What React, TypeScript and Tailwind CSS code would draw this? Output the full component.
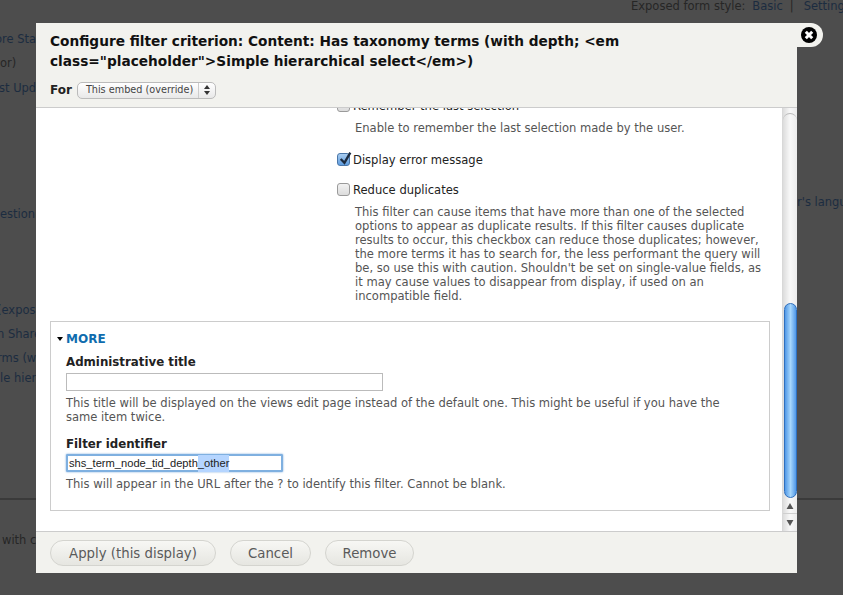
const font = { fontFamily: '"DejaVu Sans", sans-serif' };

function Checkbox({ checked = false }: { checked?: boolean }) {
  return (
    <span
      className={`relative h-[13px] w-[13px] shrink-0 rounded-[3px] border ${
        checked
          ? "border-[#4a76a8] bg-gradient-to-b from-[#a9cdf0] to-[#5f9de0]"
          : "border-[#9a9a9a] bg-gradient-to-b from-[#f2f2f2] to-[#dcdcdc]"
      }`}
    >
      {checked && (
        <svg viewBox="0 0 14 14" className="absolute -top-[3px] left-0 h-[15px] w-[15px]">
          <path d="M2.5 7.5 L6 11 L11.5 1.5" fill="none" stroke="#1d2c40" strokeWidth="2.2" />
        </svg>
      )}
    </span>
  );
}

function PillButton({ label, width }: { label: string; width: string }) {
  return (
    <button
      type="button"
      className={`flex h-[26px] items-center justify-center rounded-full border border-[#d4d4cf] bg-gradient-to-b from-[#f7f7f4] to-[#e6e6e1] pt-[1px] text-[13.3px] text-[#5a5a5a] ${width}`}
    >
      {label}
    </button>
  );
}

function Backdrop() {
  return (
    <div className="flex h-[595px] flex-col overflow-hidden bg-[#4d4d4d] text-[11.5px] text-[#1c2c40]">
      <div className="flex h-[13px] gap-[7px] whitespace-nowrap pl-[631px] leading-[13px]">
        <span className="text-[#262626]">Exposed form style:</span>
        <span>Basic</span>
        <span className="text-[#262626]">|</span>
        <span className="ml-[3px]">Settings</span>
      </div>
      <div className="mt-[18px] flex justify-between whitespace-nowrap">
        <div className="flex flex-col">
          <span className="ml-[-5px] h-[24px]">ore Stat</span>
          <span className="h-[25px] text-[#262626]">or)</span>
          <span className="ml-[-1px] h-[126px]">st Upda</span>
          <span className="h-[96px]">estion</span>
          <span className="ml-[-3px] h-[24px]">(expos</span>
          <span className="ml-[-3px] h-[24px]">n Share</span>
          <span className="ml-[-3px] h-[20px]">rms (w</span>
          <span className="h-[24px]">le hiera</span>
        </div>
        <span className="mt-[163px] w-[46px] overflow-hidden">r's langu</span>
      </div>
      <div className="mt-[104px] h-[2px] bg-[#3a3a3a]" />
      <div className="mt-[32px] whitespace-nowrap pl-[2px] text-[#262626]">with c</div>
    </div>
  );
}

function Scrollbar() {
  return (
    <div className="flex w-[15px] shrink-0 flex-col border-l border-[#d8d8d8] bg-gradient-to-r from-[#dcdcdc] via-[#f8f8f8] to-[#ececec]">
      <div className="mt-[5px] h-[7px] rounded-t-full border-t border-[#b9b9b9]" />
      <div className="mt-[183px] flex h-[195px] justify-center">
        <div className="w-[13px] rounded-full border border-[#2f6fbd] bg-gradient-to-r from-[#4f97e6] via-[#a6d6fb] to-[#4f97e6]" />
      </div>
      <div className="flex flex-1 flex-col">
        <span className="flex h-[16px] items-center justify-center border-b border-[#cfcfcf]">
          <svg viewBox="0 0 8 7" className="h-[6px] w-[8px]"><path d="M4 0 L8 7 L0 7Z" fill="#555" /></svg>
        </span>
        <span className="flex flex-1 items-center justify-center">
          <svg viewBox="0 0 8 7" className="h-[6px] w-[8px]"><path d="M0 0 L8 0 L4 7Z" fill="#555" /></svg>
        </span>
      </div>
    </div>
  );
}

function Dialog() {
  return (
    <div className="absolute left-[36px] top-[23px] flex h-[550px] w-[761px] flex-col bg-[#f2f2ee]">
      {/* close tab hangs off the top right corner */}
      <div className="absolute -right-[26px] top-0 flex h-[24px] w-[28px] items-center justify-center rounded-r-[12px] bg-[#f2f2ee] pb-[1px]">
        <svg viewBox="0 0 16 16" className="h-[16px] w-[16px]">
          <circle cx="8" cy="8" r="8" fill="#000" />
          <path d="M4.8 4.8 L11.2 11.2 M11.2 4.8 L4.8 11.2" stroke="#fff" strokeWidth="3" />
        </svg>
      </div>

      <header className="h-[85px] shrink-0 border-b border-[#ccc] px-[14px] pt-[8px]">
        <h1 className="text-[13.7px] font-bold leading-[20px] text-[#111]">
          Configure filter criterion: Content: Has taxonomy terms (with depth; &lt;em
          <br />
          class="placeholder"&gt;Simple hierarchical select&lt;/em&gt;)
        </h1>
        <div className="mt-[10px] flex items-center gap-[5px]">
          <span className="text-[12px] font-bold text-[#222]">For</span>
          <div className="flex h-[17px] w-[139px] items-center rounded-[5px] border border-[#bbb] bg-gradient-to-b from-[#fff] to-[#e8e8e8] text-[9.7px] text-[#444]">
            <span className="w-[120px] pl-[8px] whitespace-nowrap">This embed (override)</span>
            <span className="flex h-full flex-1 flex-col items-center justify-center gap-[2px] border-l border-[#ccc]">
              <svg viewBox="0 0 6 4" className="h-[4px] w-[6px]"><path d="M3 0 L6 4 L0 4Z" fill="#333" /></svg>
              <svg viewBox="0 0 6 4" className="h-[4px] w-[6px]"><path d="M0 0 L6 0 L3 4Z" fill="#333" /></svg>
            </span>
          </div>
        </div>
      </header>

      <div className="flex min-h-0 flex-1 bg-white">
        <div className="min-w-0 flex-1 overflow-hidden">
          <div className="ml-[301px] mt-[-10px] w-[420px] text-[11.55px] leading-[14px] text-[#555]">
            <label className="flex h-[15px] items-center gap-[3px] text-[#222]">
              <Checkbox /> Remember the last selection
            </label>
            <p className="ml-[18px] mt-[8px]">Enable to remember the last selection made by the user.</p>
            <label className="mt-[17px] flex h-[15px] items-center gap-[3px] text-[#222]">
              <Checkbox checked /> Display error message
            </label>
            <label className="mt-[15px] flex h-[15px] items-center gap-[3px] text-[#222]">
              <Checkbox /> Reduce duplicates
            </label>
            <p className="ml-[18px] mt-[8px] w-[415px]">
              This filter can cause items that have more than one of the selected
              <br />
              options to appear as duplicate results. If this filter causes duplicate
              <br />
              results to occur, this checkbox can reduce those duplicates; however,
              <br />
              the more terms it has to search for, the less performant the query will
              <br />
              be, so use this with caution. Shouldn't be set on single-value fields, as
              <br />
              it may cause values to disappear from display, if used on an
              <br />
              incompatible field.
            </p>
          </div>
          <fieldset className="ml-[14px] mt-[18px] h-[190px] w-[720px] border border-[#ccc] pl-[15px] pt-[9px]">
            <div className="relative flex items-center text-[12px] font-bold leading-[16px] text-[#0f6cae]">
              <span className="absolute -left-[9px] top-[6px] h-0 w-0 border-x-[3px] border-t-[4px] border-x-transparent border-t-black" />
              MORE
            </div>
            <label className="mt-[7px] block text-[11.8px] font-bold leading-[16px] text-[#222]">Administrative title</label>
            <input className="mt-[3px] block h-[18px] w-[317px] border border-[#bbb] bg-white" />
            <p className="mt-[5px] w-[680px] text-[11.55px] leading-[14px] text-[#555]">
              This title will be displayed on the views edit page instead of the default one. This might be useful if you have the same item twice.
            </p>
            <label className="mt-[12px] block text-[11.8px] font-bold leading-[16px] text-[#222]">Filter identifier</label>
            <div className="mt-[2px] flex h-[18px] w-[217px] items-center rounded-[1px] border-2 border-[#7fb0e0] pl-[1px] pt-[1px] text-[11.15px] text-[#222] shadow-[0_0_2px_#6a9fd8]" style={{ fontFamily: '"Liberation Sans", sans-serif' }}>
              shs_term_node_tid_depth<span className="bg-[#b5d5ff]">_other</span>
            </div>
            <p className="mt-[5px] text-[11.55px] leading-[14px] text-[#555]">
              This will appear in the URL after the ? to identify this filter. Cannot be blank.
            </p>
          </fieldset>
        </div>
        <Scrollbar />
      </div>

      <footer className="flex h-[42px] shrink-0 items-center gap-[14px] border-t border-[#ccc] pl-[14px] pt-[1px]">
        <PillButton label="Apply (this display)" width="w-[166px]" />
        <PillButton label="Cancel" width="w-[81px]" />
        <PillButton label="Remove" width="w-[89px]" />
      </footer>
    </div>
  );
}

export default function App() {
  return (
    <div className="relative h-[595px] w-[843px] overflow-hidden" style={font}>
      <Backdrop />
      <Dialog />
    </div>
  );
}
